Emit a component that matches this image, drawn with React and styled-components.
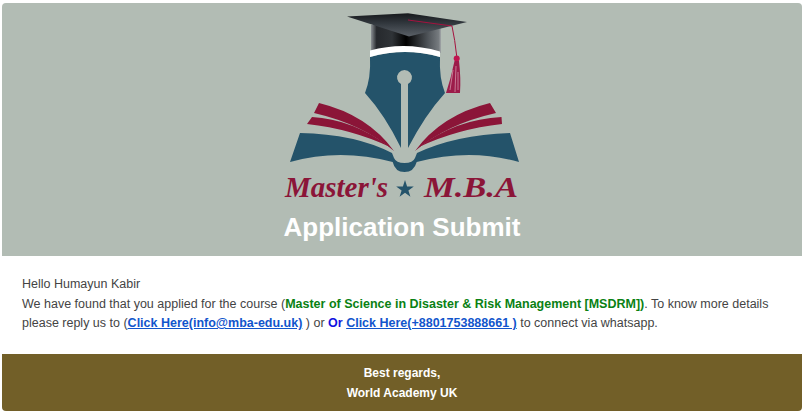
import React from "react";
import styled, { createGlobalStyle } from "styled-components";

const Global = createGlobalStyle`
  html, body {
    margin: 0;
    padding: 0;
    background: #fff;
  }
`;

const Card = styled.div`
  width: 800px;
  height: 408px;
  margin: 3px 0 0 2px;
  display: flex;
  flex-direction: column;
  border-radius: 4px;
  overflow: hidden;
  font-family: "Liberation Sans", Arial, sans-serif;
`;

const Header = styled.header`
  height: 253px;
  background: #b2bcb4;
  display: flex;
  flex-direction: column;
  align-items: center;
  padding-top: 7px;
  box-sizing: border-box;
`;

const Logo = styled.svg`
  display: block;
  width: 250px;
  height: 195px;
`;

const Title = styled.h1`
  margin: 0;
  font-size: 26px;
  line-height: 30px;
  margin-top: 7px;
  font-weight: 700;
  color: #fff;
`;

const Message = styled.section`
  height: 98px;
  box-sizing: border-box;
  padding: 19px 20px;
  font-size: 12.5px;
  line-height: 19.6px;
  color: #444;
`;

const Course = styled.strong`
  color: #0a8113;
`;

const Or = styled.strong`
  color: #1212e0;
`;

const Action = styled.a`
  color: #1155cc;
  font-weight: 700;
  text-decoration: underline;
`;

const Footer = styled.footer`
  flex: 1;
  background: #725f28;
  color: #fff;
  text-align: center;
  font-size: 12px;
  font-weight: 700;
  line-height: 20px;
  padding-top: 9px;
  box-sizing: border-box;
`;

function MbaLogo() {
  return (
    <Logo viewBox="277 10 250 195" aria-label="Master's M.B.A">
      <defs>
        <linearGradient id="capTop" x1="0" y1="0" x2="0" y2="1">
          <stop offset="0" stopColor="#16191d" />
          <stop offset="0.45" stopColor="#33393f" />
          <stop offset="1" stopColor="#5a6067" />
        </linearGradient>
        <linearGradient id="capBody" x1="0" y1="0" x2="1" y2="0">
          <stop offset="0" stopColor="#8b9094" />
          <stop offset="0.08" stopColor="#26292d" />
          <stop offset="0.3" stopColor="#2f3337" />
          <stop offset="0.5" stopColor="#000" />
          <stop offset="0.8" stopColor="#4b5055" />
          <stop offset="0.97" stopColor="#777c80" />
          <stop offset="1" stopColor="#a4a8aa" />
        </linearGradient>
      </defs>

      {/* pen nib */}
      <path
        d="M370 57 Q405 47 440 57 Q439 78 445 93 Q425 115 408 148 L408 84 A7.4 7.4 0 1 0 401 84 L401 148 Q385 115 365 93 Q371 78 370 57 Z"
        fill="#24536a"
      />

      {/* cap */}
      <path d="M371 25 L441 25 L441 53 Q405 42 371 53 Z" fill="url(#capBody)" />
      <path d="M370 50.5 Q405 41 440 51.5 L440 57 Q405 47 370 57 Z" fill="#fff" />
      <path d="M347 16.5 L408 13.3 L467 22 L409 36.5 Z" fill="url(#capTop)" />
      <path d="M408 20 L452 26 Q455 40 456.7 56" fill="none" stroke="#a5123f" strokeWidth="1" />
      <circle cx="456.7" cy="58.5" r="3" fill="#c0144f" />
      <path d="M454.5 61 L459 61 Q461 78 460 93 L446 93 Q451 78 454.5 61 Z" fill="#9c1c4a" />
      <path d="M450 90 L453 70 M455 92 L456 66 M458 90 L458 72" stroke="#d9a0b4" strokeWidth="0.7" fill="none" />

      {/* book wings */}
      <g fill="#8b1538">
        <path d="M319 103 Q368 115 394 151 Q362 124 314 113 Z" />
        <path d="M312 117 Q352 119 390 147 Q352 129 307 124 Z" />
        <path d="M490 103 Q441 115 415 151 Q447 124 496 113 Z" />
        <path d="M501.5 117 Q457 119 419 147 Q457 129 502 124 Z" />
      </g>

      {/* book */}
      <path
        d="M300 133 Q355 134 392 153 L394 158 Q396 163 404.5 163 Q413 163 415 158 L417 153 Q455 135 510 133 L519 162 Q470 148 416.7 162 Q414 172 404.5 172 Q395 172 392.7 162 Q340 148 290 162 Z"
        fill="#24536a"
      />

      {/* wordmark */}
      <text x="285" y="197" textLength="103" lengthAdjust="spacingAndGlyphs" fontFamily="'Liberation Serif', serif" fontStyle="italic" fontWeight="700" fontSize="30" fill="#8b1538">
        Master's
      </text>
      <path
        d="M405 180 L407.1 186.4 L413.8 186.4 L408.4 190.4 L410.4 196.8 L405 192.8 L399.6 196.8 L401.6 190.4 L396.2 186.4 L402.9 186.4 Z"
        fill="#24536a"
      />
      <text x="424" y="197" textLength="94" lengthAdjust="spacingAndGlyphs" fontFamily="'Liberation Serif', serif" fontStyle="italic" fontWeight="700" fontSize="30" fill="#8b1538">
        M.B.A
      </text>
    </Logo>
  );
}

export default function App() {
  return (
    <>
      <Global />
      <Card>
        <Header>
          <MbaLogo />
          <Title>Application Submit</Title>
        </Header>
        <Message>
          Hello Humayun Kabir
          <br />
          We have found that you applied for the course (
          <Course>Master of Science in Disaster &amp; Risk Management [MSDRM])</Course>. To know more
          details please reply us to (<Action href="#">Click Here(info@mba-edu.uk)</Action> ) or{" "}
          <Or>Or</Or> <Action href="#">Click Here(+8801753888661 )</Action> to connect via whatsapp.
        </Message>
        <Footer>
          Best regards,
          <br />
          World Academy UK
        </Footer>
      </Card>
    </>
  );
}
